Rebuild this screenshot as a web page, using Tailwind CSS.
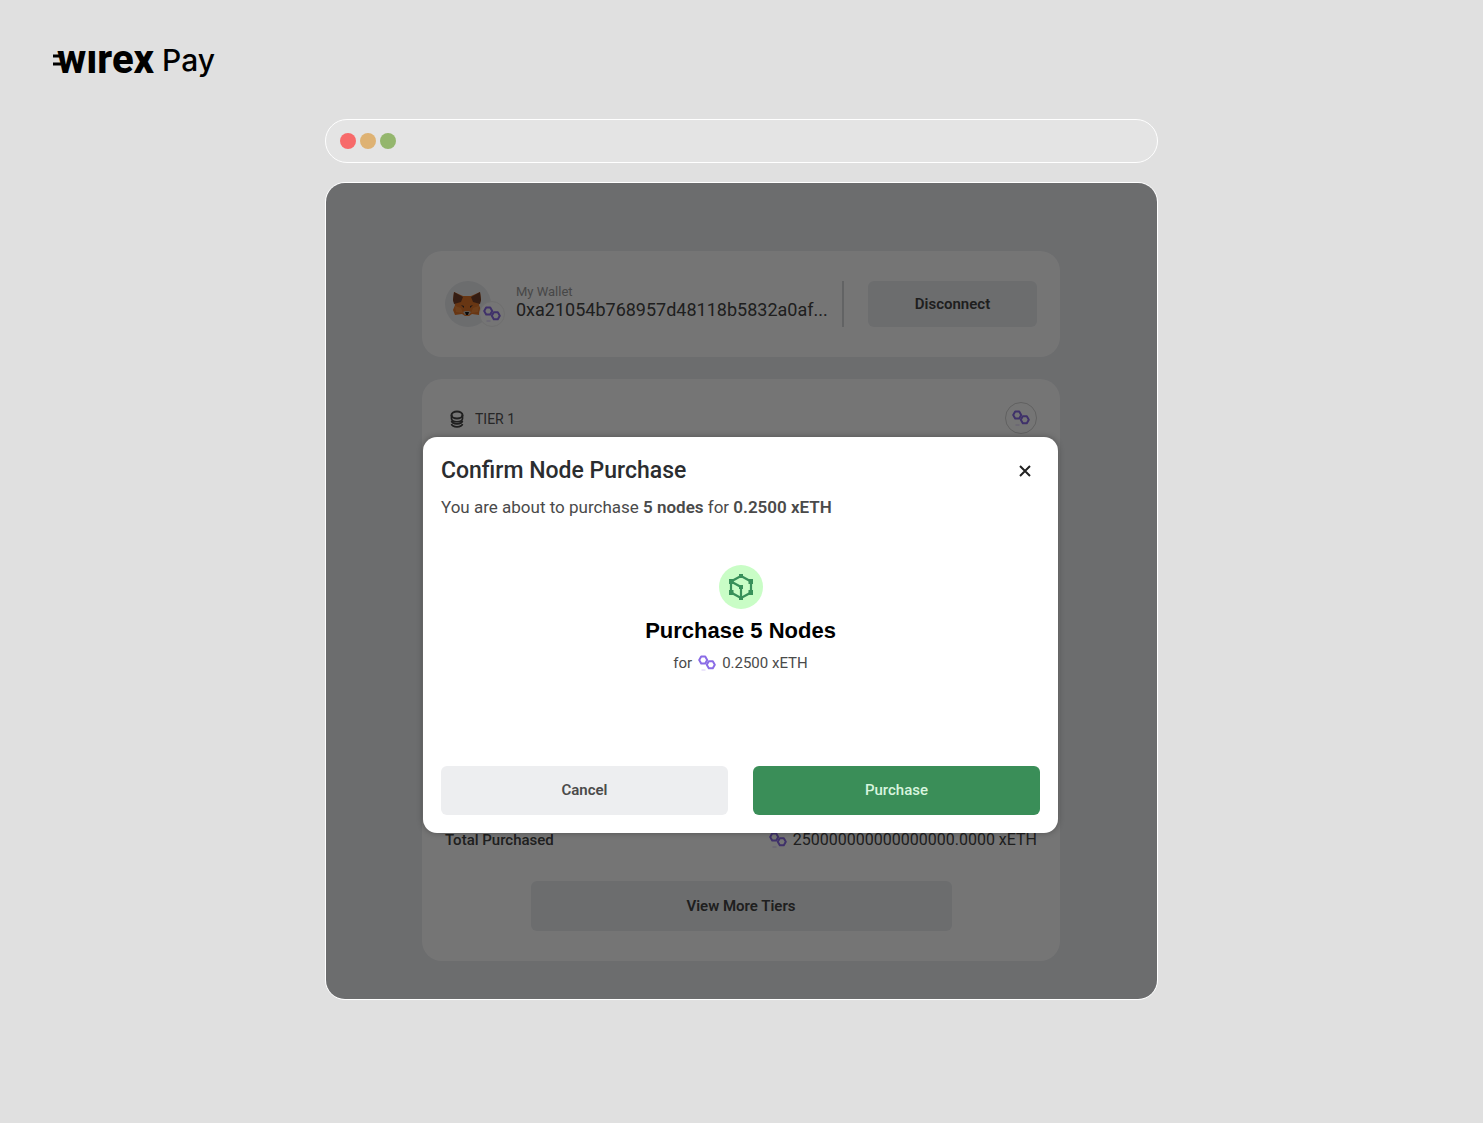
<!DOCTYPE html>
<html lang="en">
  <head>
    <meta charset="UTF-8" />
    <meta name="viewport" content="width=device-width, initial-scale=1.0" />
    <title>Wirex Pay</title>
    <script src="https://cdn.jsdelivr.net/npm/@tailwindcss/browser@4"></script>
  </head>
  <body class="min-h-screen bg-[#e0e0e0] font-['Roboto',sans-serif]">
    <!-- Shared icon -->
    <svg class="hidden">
      <symbol id="chain" viewBox="0 0 18 16">
        <g fill="none" stroke="#8a6be6" stroke-width="2" stroke-linejoin="round">
          <path d="M3.200 1.500h4L9.200 5l-2 3.500h-4L1.200 5z" />
          <path d="M10.800 6.300h4l2 3.500-2 3.500h-4l-2-3.500z" />
        </g>
        <path d="M3.500 15h4" stroke="#8a6be6" stroke-opacity=".35" />
      </symbol>
    </svg>

    <header class="px-[53px] pt-11">
      <a href="#" aria-label="Wirex Pay" class="flex h-8 w-fit items-center text-black">
        <svg class="-mr-1 h-6 w-2" viewBox="0 0 8 24">
          <path d="M0 8h7M0 16h8" stroke="#000" stroke-width="3.200" />
        </svg>
        <span class="text-[40px] leading-8 font-extrabold">wırex</span>
        <span class="ml-2 font-['Inter',sans-serif] text-[30px] leading-8 font-medium">Pay</span>
      </a>
    </header>

    <main class="mx-auto mt-[43px] w-full max-w-[833px] pb-10">
      <!-- Browser bar -->
      <div class="flex h-11 items-center gap-1 rounded-full border border-white bg-[#e4e4e4] px-3.5">
        <span class="size-4 rounded-full bg-[#f76a6a]"></span>
        <span class="size-4 rounded-full bg-[#deb273]"></span>
        <span class="size-4 rounded-full bg-[#94b66d]"></span>
      </div>

      <!-- Browser window -->
      <div class="relative mt-[19px] overflow-hidden rounded-[20px] border border-white bg-[#ebedf0] pt-17 pr-[97px] pb-[38px] pl-24">
        <section class="flex items-center rounded-[20px] bg-white px-[23px] py-[30px]">
          <div class="relative size-[46px] shrink-0 rounded-full bg-[#ebedf0]">
            <svg class="absolute top-2.5 left-2 h-[26px] w-7" viewBox="0 0 28 26">
              <path d="M1 1l9 4h8l9-4 1 8-2 5 2 5-2 5-7-1-3 2h-4l-3-2-7 1-2-5 2-5-2-5z" fill="#e2762b" />
              <path d="M1 1l9 5-2 5-7 2-1-4zM27 1l-9 5 2 5 7 2 1-4z" fill="#74412a" />
              <path d="M2 15l6 2 2 5-7-1zM26 15l-6 2-2 5 7-1z" fill="#f08a3c" />
              <path d="M8 14l3 1v2zM20 14l-3 1v2z" fill="#3a3333" />
              <path d="M10 21l2-1h4l2 1-2 3h-4z" fill="#c9b9ab" />
              <path d="M12 21h4l-1 3h-2z" fill="#161616" />
            </svg>
            <span class="absolute top-5 left-[34px] flex size-[26px] items-center justify-center rounded-full border border-[#f0f0f0] bg-white">
              <svg class="h-4 w-[18px] shrink-0"><use href="#chain" /></svg>
            </span>
          </div>
          <div class="ml-[25px] flex-1 pb-1">
            <p class="text-[13px] leading-4 text-[#9c9c9c]">My Wallet</p>
            <p class="text-lg leading-5 whitespace-nowrap text-[#444]">0xa21054b768957d48118b5832a0af...</p>
          </div>
          <div class="mr-6 ml-3 h-[46px] w-0.5 bg-[#d5d7d9]"></div>
          <button type="button" class="h-[46px] w-[169px] rounded-md bg-[#ebedf0] text-[15px] font-semibold text-[#444]">Disconnect</button>
        </section>

        <section class="mt-[22px] flex min-h-[582px] flex-col justify-between rounded-[20px] bg-white px-[23px] pt-[23px] pb-[30px]">
          <div class="flex items-center justify-between">
            <div class="flex items-center gap-2.5 pt-0.5 pl-1">
              <svg class="h-[18px] w-4" viewBox="0 0 16 18" fill="none" stroke="#444" stroke-width="2">
                <ellipse cx="8" cy="5" rx="5.5" ry="3.5" />
                <path d="M2.500 5v3.500c0 4.300 11 4.300 11 0V5M2.500 11c1 3.700 10 3.700 11 0M2.500 14c1 3.700 10 3.700 11 0" stroke-width="1.700" />
              </svg>
              <h2 class="text-sm text-[#555]">TIER 1</h2>
            </div>
            <span class="flex size-8 items-center justify-center rounded-full border border-[#d2d2d2]">
              <svg class="h-4 w-[18px]"><use href="#chain" /></svg>
            </span>
          </div>
          <div>
            <div class="flex items-center justify-between leading-6 text-[#444]">
              <span class="text-[15px] font-medium">Total Purchased</span>
              <span class="flex items-center gap-1.5">
                <svg class="h-4 w-[18px]"><use href="#chain" /></svg>
                250000000000000000.0000 xETH
              </span>
            </div>
            <button type="button" class="mx-auto mt-[29px] block h-[50px] w-full max-w-[421px] rounded-md bg-[#ebedf0] text-[15px] font-semibold text-[#444]">View More Tiers</button>
          </div>
        </section>

        <!-- Confirm dialog -->
        <div class="absolute inset-0 flex items-start justify-center bg-black/54 pt-[254px] pr-[98px] pl-24">
          <div role="dialog" aria-labelledby="dialogTitle" class="w-full max-w-[635px] rounded-[14px] bg-white px-[18px] pt-5 pb-[18px] shadow-[0_0_6px_rgb(0,0,0,0.3)]">
            <div class="flex items-center justify-between">
              <h1 id="dialogTitle" class="text-[23px] leading-7 font-medium text-[#2b2d2f]">Confirm Node Purchase</h1>
              <button type="button" aria-label="Close" class="mr-2">
                <svg class="size-3.5" viewBox="0 0 14 14">
                  <path d="M2 2l10 10M12 2L2 12" stroke="#222" stroke-width="2" />
                </svg>
              </button>
            </div>
            <p class="mt-2.5 text-[17px] leading-6 text-[#4a4a4a]">
              You are about to purchase <b class="font-semibold">5 nodes</b> for <b class="font-semibold">0.2500 xETH</b>
            </p>

            <div class="mt-[46px] flex flex-col items-center">
              <span class="flex size-11 items-center justify-center rounded-full bg-[#c9fdc6]">
                <svg class="size-7" viewBox="0 0 28 28" fill="none" stroke="#38905a" stroke-width="2.200">
                  <path d="M14 3l10 5.500v11L14 25 4 19.500v-11zM4 8.500l10 5.500v11" />
                  <path d="M12 1h4v4h-4zM21.500 6h4.500v5h-4.500zM21.500 17h4.500v5h-4.500zM12 23h4v4h-4zM2 17h4.500v5H2zM2 6h4.500v5H2zM12 12h4v4h-4z" fill="#38905a" stroke="none" />
                </svg>
              </span>
              <h2 class="mt-2 font-['Liberation_Sans',Arial,sans-serif] text-[22px] leading-7 font-bold text-black">Purchase 5 Nodes</h2>
              <p class="mt-1.5 flex items-center gap-1.5 text-[15px] leading-6 text-[#4a4a4a]">
                for
                <svg class="h-4 w-[18px]"><use href="#chain" /></svg>
                0.2500 xETH
              </p>
            </div>

            <div class="mt-[91px] grid grid-cols-2 gap-[25px]">
              <button type="button" class="h-[49px] rounded-md bg-[#edeef0] text-[15px] font-semibold text-[#4a4a4a]">Cancel</button>
              <button type="button" class="h-[49px] rounded-md bg-[#3a8e58] text-[15px] font-medium text-[#d8f5df]">Purchase</button>
            </div>
          </div>
        </div>
      </div>
    </main>
  </body>
</html>
